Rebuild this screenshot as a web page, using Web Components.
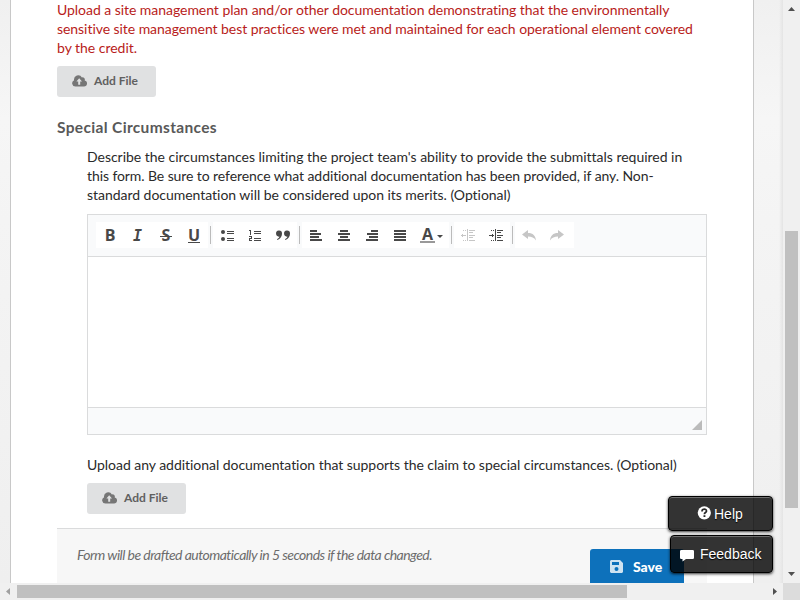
<!DOCTYPE html>
<html lang="en"><head><meta charset="utf-8"><title>Special Circumstances</title>
<style>html,body{margin:0;height:100%;overflow:hidden;font-family:Lato,sans-serif;font-size:14px;color:#222}</style></head>
<body><app-window></app-window>
<script>
const define=(name,html)=>customElements.define(name,class extends HTMLElement{
  constructor(){super();this.attachShadow({mode:'open'}).innerHTML=html;}
});

define('upload-button',`<style>
:host{display:flex;box-sizing:border-box;width:99px;height:31px;padding:0 0 2px 15px;align-items:center;gap:7px;background:#e0e1e2;border-radius:3px;color:#606060;font:700 12px Lato,sans-serif;white-space:nowrap}
svg{display:block;flex:none}</style>
<svg width="15" height="12" viewBox="0 0 15 12"><path d="M3.5 11.5A3.3 3.3 0 0 1 2.1 5.2 4.2 4.2 0 0 1 9.9 2.4 2.3 2.3 0 0 1 12.7 5.4 3.1 3.1 0 0 1 12 11.5Z" fill="#767676"/><path d="M7.2 3.3 10 6.5H8.2V9.7H6.2V6.5H4.4Z" fill="#e0e1e2"/></svg><span><slot></slot></span>`);

const icons={
 ul:'<g shape-rendering="auto"><circle cx="10" cy="10" r="2"/><circle cx="10" cy="17" r="2"/></g><path d="M14 9h7v1h-7zM14 11h7v1h-7zM14 16h7v1h-7zM14 18h7v1h-7z"/>',
 ol:'<path d="M8 8h2v5h-1v-4H8zM8 14h3v3H9v1h2v1H8v-3h2v-1H8zM13 9h7v1h-7zM13 11h7v1h-7zM13 16h7v1h-7zM13 18h7v1h-7z"/>',
 quote:'<g shape-rendering="auto" transform="translate(.8 0)"><path d="M9 8.5a3.1 3.1 0 0 1 3.2 3.2c0 3-1.8 5.2-4.6 6.3l-.4-.8c1.5-.8 2.3-1.6 2.4-2.6A3.05 3.05 0 1 1 9 8.5"/><path transform="translate(8)" d="M9 8.5a3.1 3.1 0 0 1 3.2 3.2c0 3-1.8 5.2-4.6 6.3l-.4-.8c1.5-.8 2.3-1.6 2.4-2.6A3.05 3.05 0 1 1 9 8.5"/></g>',
 left:'<path d="M8 8h7v2H8zM8 11h11v2H8zM8 14h9v2H8zM8 17h12v2H8z"/>',
 center:'<path d="M10 8h8v2h-8zM8 11h12v2H8zM10 14h8v2h-8zM8 17h12v2H8z"/>',
 right:'<path d="M13 8h7v2h-7zM9 11h11v2H9zM11 14h9v2h-9zM8 17h12v2H8z"/>',
 justify:'<path d="M8 8h12v2H8zM8 11h12v2H8zM8 14h12v2H8zM8 17h12v2H8z"/>',
 outdent:'<path d="M7 13h5v1H7zM8 12h1v3H8zM13 7h1v12h-1zM15 8h6v1h-6zM15 10h4v1h-4zM15 13h6v1h-6zM15 15h4v1h-4zM15 18h6v1h-6zM9 8h1v1H9zM11 8h1v1h-1zM9 18h1v1H9zM11 18h1v1h-1z"/>',
 indent:'<path d="M7 13h5v1H7zM10 12h1v3h-1zM13 7h1v12h-1zM15 8h6v1h-6zM15 10h4v1h-4zM15 13h6v1h-6zM15 15h4v1h-4zM15 18h6v1h-6zM9 8h1v1H9zM11 8h1v1h-1zM9 18h1v1H9zM11 18h1v1h-1z"/>',
 undo:'<path shape-rendering="auto" d="M7 12.5 13 8v3c5 0 7.5 2.5 8 7.5-2-3-4.3-4-8-4V17Z"/>',
 redo:'<path shape-rendering="auto" d="M21 12.5 15 8v3c-5 0-7.5 2.5-8 7.5 2-3 4.3-4 8-4V17Z"/>'};
customElements.define('tool-button',class extends HTMLElement{
 connectedCallback(){
  const k=this.getAttribute('icon');
  this.attachShadow({mode:'open'}).innerHTML=`<style>:host{display:flex;width:28px;height:26px;flex:none;color:#484848;fill:currentColor;align-items:center;justify-content:center}:host([off]){color:#c6c6c6}:host([wide]){width:35px}svg{display:block}</style>`+
  (icons[k]?`<svg width="28" height="26" shape-rendering="crispEdges">${icons[k]}</svg>`:'<slot></slot>');
 }});

define('editor-bar',`<style>
:host{display:flex;box-sizing:border-box;height:42px;padding:7px 8px;background:#f9fafb;border-bottom:1px solid #dadbdc}
div{display:flex;height:26px;background:#fff;flex:none}
i.sep{width:1px;height:18px;margin:4px 2px 0 2px;background:#bbb;flex:none}
b,em{font:700 16px/18px "Open Sans",sans-serif}em{font:italic 700 15px/18px "DejaVu Sans Mono",monospace;margin:2px 0 0 -1px}
.s{padding:0 2px;background:linear-gradient(#484848,#484848) 0 10px/100% 1px no-repeat}
.u,.a{line-height:14px;border-bottom:1px solid #484848}.a{border-bottom:2px solid #999;width:15px;text-align:center}
.caret{border:3px solid transparent;border-top:3px solid #484848;border-bottom:0;margin:2px 0 0 2px}
</style>
<div><tool-button><b>B</b></tool-button><tool-button><em>I</em></tool-button><tool-button><b class="s">S</b></tool-button><tool-button><b class="u">U</b></tool-button></div><i class="sep"></i>
<div><tool-button icon="ul"></tool-button><tool-button icon="ol"></tool-button><tool-button icon="quote"></tool-button></div><i class="sep"></i>
<div><tool-button icon="left"></tool-button><tool-button icon="center"></tool-button><tool-button icon="right"></tool-button><tool-button icon="justify"></tool-button><tool-button wide><b class="a">A</b><span class="caret"></span></tool-button></div><i class="sep"></i>
<div><tool-button icon="outdent" off></tool-button><tool-button icon="indent"></tool-button></div><i class="sep"></i>
<div style="width:59px"><tool-button icon="undo" off></tool-button><tool-button icon="redo" off></tool-button></div>`);

define('rich-editor',`<style>
:host{display:flex;flex-direction:column;box-sizing:border-box;width:620px;height:221px;border:1px solid #dadbdc;background:#fff}
main{flex:1}footer{height:26px;background:#f9fafb;border-top:1px solid #dadbdc;display:flex;justify-content:flex-end;align-items:flex-end}
svg{margin:0 4px 4px 0}</style><editor-bar></editor-bar><main></main><footer><svg width="10" height="10"><path d="M10 0V10H0Z" fill="#bbb"/></svg></footer>`);

define('form-page',`<style>
:host{display:block;box-sizing:border-box;width:744px;height:583px;margin-left:10px;padding:0 46px;background:#fff;border:solid #c8c8c8;border-width:0 1px;overflow:hidden}
p{margin:0;line-height:19px;font-size:14px;color:#2a2a2a;white-space:nowrap}
p.req{color:#b81c20}h4{margin:21px 0 0;font:700 15.5px/19px Lato,sans-serif;color:#595959}
.in{margin-left:30px}.req+upload-button{margin-top:9px}
</style>
<p class="req"><text-line w="613">Upload a site management plan and/or other documentation demonstrating that the environmentally</text-line><text-line w="636.5">sensitive site management best practices were met and maintained for each operational element covered</text-line><text-line w="80">by the credit.</text-line></p>
<upload-button>Add File</upload-button>
<h4><text-line w="160">Special Circumstances</text-line></h4>
<div class="in"><p style="margin-top:10px"><text-line w="595">Describe the circumstances limiting the project team's ability to provide the submittals required in</text-line><text-line w="567">this form. Be sure to reference what additional documentation has been provided, if any. Non-</text-line><text-line w="424">standard documentation will be considered upon its merits. (Optional)</text-line></p>
<rich-editor style="margin-top:10px"></rich-editor>
<p style="margin-top:20px"><text-line w="590.5">Upload any additional documentation that supports the claim to special circumstances. (Optional)</text-line></p>
<upload-button style="margin-top:9px">Add File</upload-button></div>
<save-bar></save-bar>`);

/* One line of copy; letter spacing is distributed to reach the measure w. */
customElements.define('text-line',class extends HTMLElement{
 connectedCallback(){
  this.attachShadow({mode:'open'}).innerHTML='<style>:host{display:block;height:19px}span{display:inline-block}</style><span><slot></slot></span>';
  const s=this.shadowRoot.querySelector('span'),w=s.getBoundingClientRect().width;
  if(w)s.style.letterSpacing=((+this.getAttribute('w')-w)/this.textContent.length)+'px';
 }});

define('save-bar',`<style>
:host{display:flex;box-sizing:border-box;width:650px;height:60px;margin-top:14px;padding:0 23px 0 20px;justify-content:space-between;background:#f7f7f7;border-top:1px solid #dadbdc}
em{font:italic 14px/19px Lato,sans-serif;color:#6c6c6c;margin-top:16px;white-space:nowrap}
button{all:unset;box-sizing:border-box;margin-top:20px;width:94px;height:37px;padding:0 0 2px 20px;border-radius:3px;background:#0d71bb;color:#fff;display:flex;align-items:center;gap:10px;font:900 14px Lato,sans-serif}
</style><em><text-line w="354.5">Form will be drafted automatically in 5 seconds if the data changed.</text-line></em>
<button><svg width="13" height="13" viewBox="0 0 13 13"><path fill="#cfe3f1" fill-rule="evenodd" d="M1 0H10L13 3V12L12 13H1L0 12V1ZM2 2V5H9V2ZM6.5 7A2 2 0 1 0 6.5 11 2 2 0 1 0 6.5 7Z"/></svg>Save</button>`);

define('float-button',`<style>
:host{display:flex;box-sizing:border-box;align-items:center;background:rgba(0,0,0,.8);color:#fff;border:1px solid #000;border-radius:4px;box-shadow:0 1px 3px rgba(0,0,0,.8),inset 0 1px 0 rgba(255,255,255,.3);font:14px "Liberation Sans",Arial,sans-serif;text-shadow:0 1px 1px #000;white-space:nowrap}
</style><slot name="icon"></slot><span><slot></slot></span>`);

define('float-stack',`<style>
:host{position:absolute;right:27px;top:496px;display:flex;flex-direction:column;align-items:flex-end;gap:4px}
svg{display:block}</style>
<float-button style="width:105px;height:35px;padding-left:28px"><svg slot="icon" width="17" height="16" viewBox="0 0 17 16"><circle cx="7.3" cy="6.8" r="6.6" fill="#fff"/><path d="M5 5.4C5 2.3 9.7 2.5 9.5 5.1 9.4 6.6 7.4 6.4 7.4 8.2" fill="none" stroke="#282828" stroke-width="1.7"/><path d="M6.5 9.2h1.9V11H6.5z" fill="#282828"/></svg>Help</float-button>
<float-button style="width:103px;height:38px;padding-left:9px;padding-bottom:0"><svg slot="icon" width="20" height="12" viewBox="0 0 20 12" style="margin-top:4px"><path d="M1.3 0H12.7Q14 0 14 1.3V7.7Q14 9 12.7 9H6L2.5 11.5V9H1.3Q0 9 0 7.7V1.3Q0 0 1.3 0Z" fill="#fff"/></svg><span style="margin-top:2px">Feedback</span></float-button>`);

define('scroll-track',`<style>
:host{display:flex;background:#f0f0f0;align-items:center}
:host([axis=y]){flex-direction:column;padding-top:7px;box-sizing:border-box}
</style><slot></slot>`);

define('app-window',`<style>
:host{display:grid;position:relative;width:800px;height:600px;grid-template-columns:783px 17px;grid-template-rows:583px 17px;overflow:hidden}
.view{overflow:hidden;background:linear-gradient(90deg,transparent 779px,#e4e4e4),linear-gradient(#f0f0f0,#f6f6f6 120px,#f4f4f4 220px,#efefef)}
svg{display:block;flex:none}.corner{background:#dcdcdc}
</style>
<div class="view"><form-page></form-page></div>
<scroll-track axis="y"><svg width="7" height="4"><path d="M0 4 3.5 0 7 4Z" fill="#505050"/></svg><b style="width:13px;height:277px;margin-top:220px;background:#c0c0c0;flex:none"></b><svg style="margin-top:64px" width="7" height="4"><path d="M0 0H7L3.5 4Z" fill="#505050"/></svg></scroll-track>
<scroll-track axis="x"><svg style="margin-left:6px" width="4" height="7"><path d="M4 0V7L0 3.5Z" fill="#a0a0a0"/></svg><b style="width:610px;height:13px;margin-left:7px;background:#c0c0c0"></b><svg style="margin-left:146px" width="4" height="7"><path d="M0 0V7L4 3.5Z" fill="#505050"/></svg></scroll-track>
<div class="corner"></div><float-stack></float-stack>`);
</script></body></html>
